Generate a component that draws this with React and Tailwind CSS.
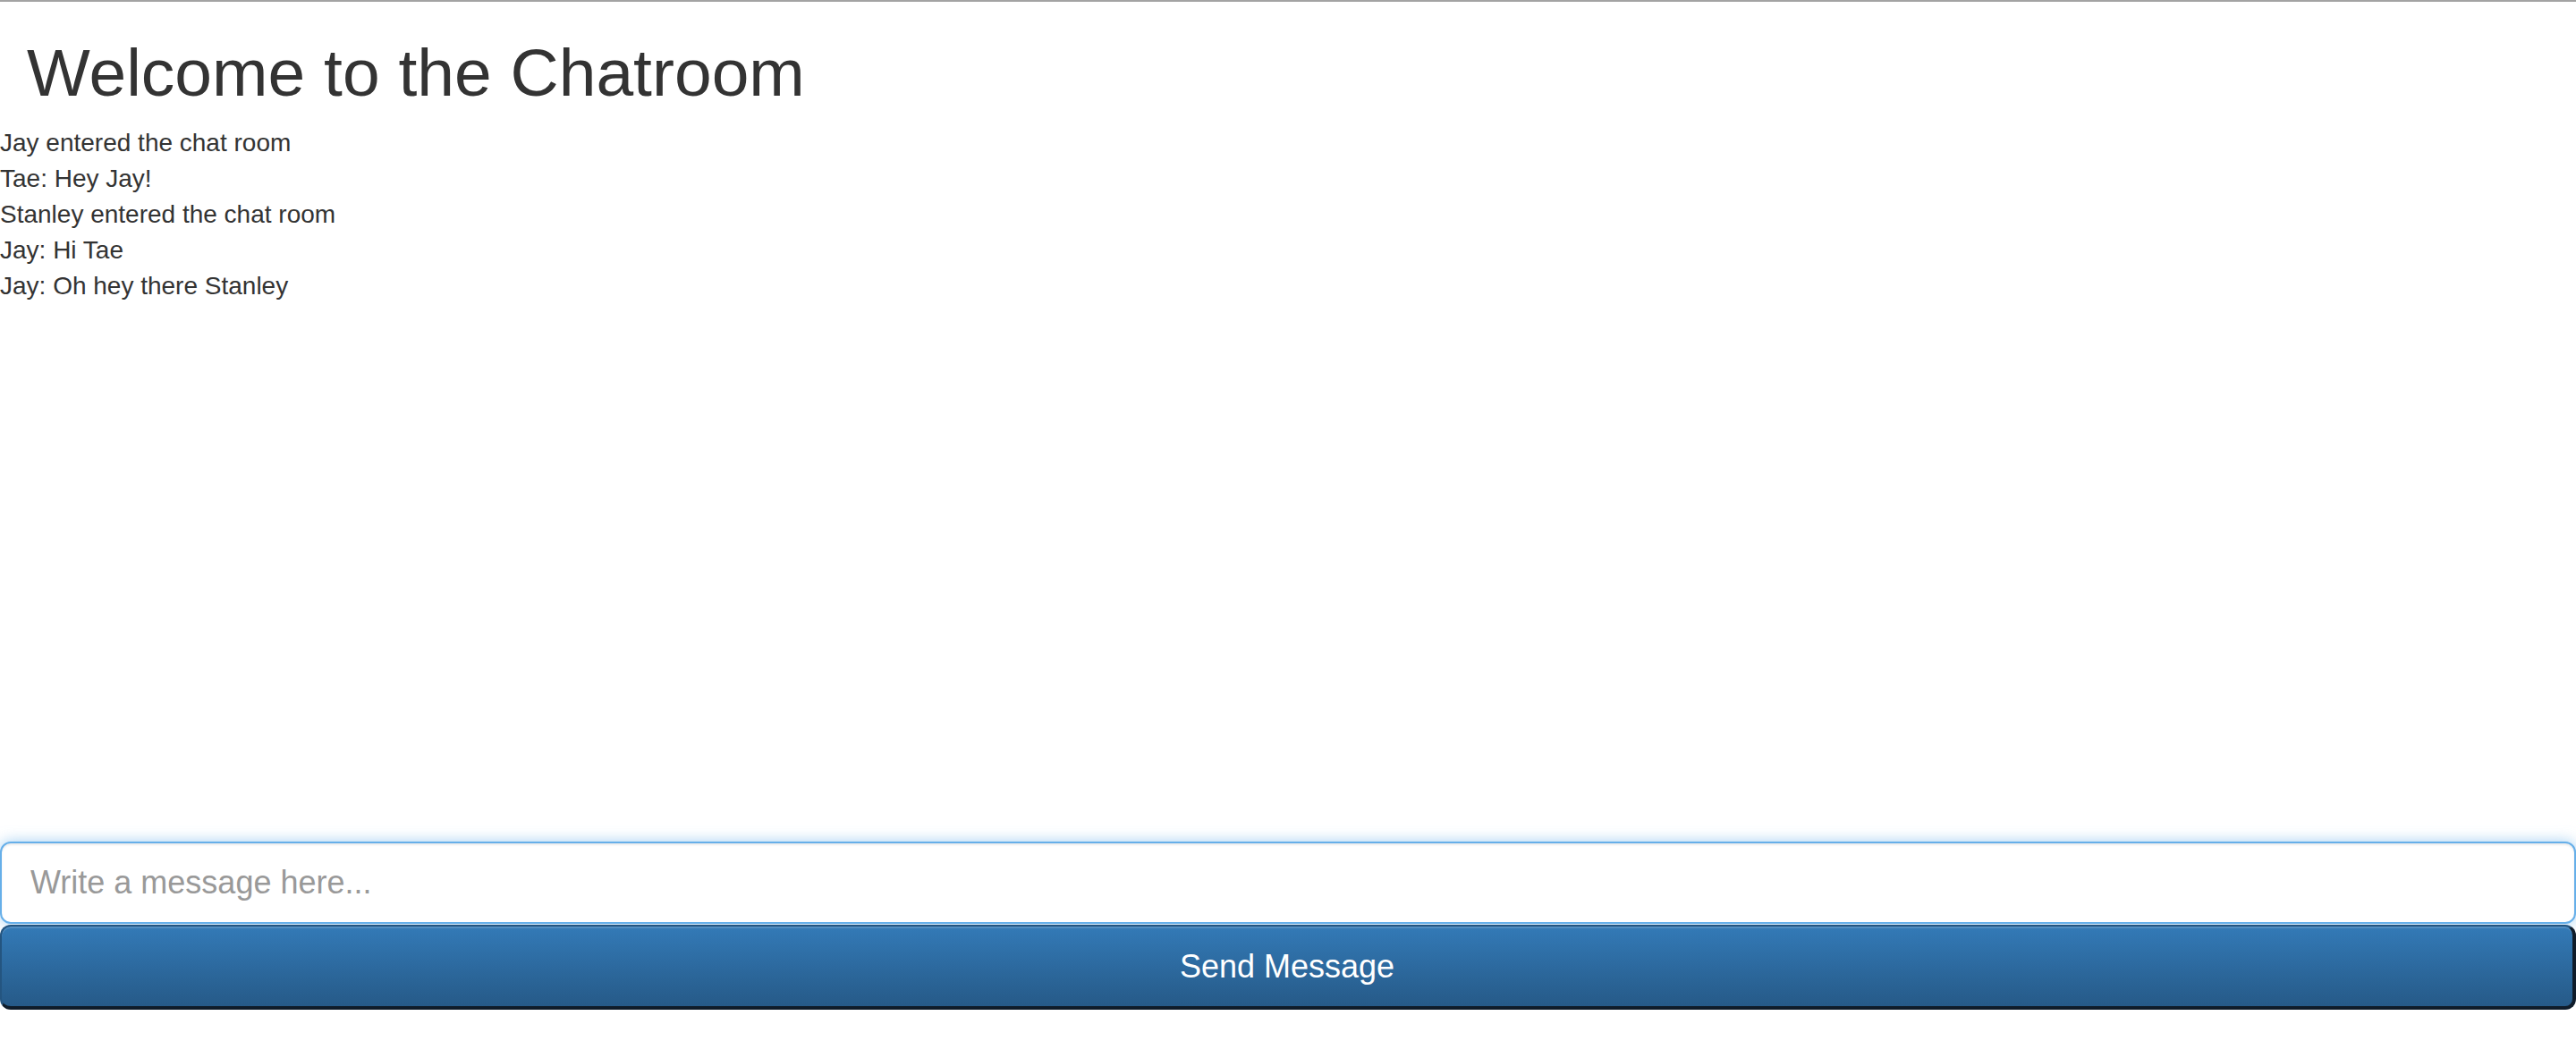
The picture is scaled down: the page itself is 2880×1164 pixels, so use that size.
import React, { useState } from 'react';

const messages = [
  'Jay entered the chat room',
  'Tae: Hey Jay!',
  'Stanley entered the chat room',
  'Jay: Hi Tae',
  'Jay: Oh hey there Stanley',
];

const App = () => {
  const [text, setText] = useState('');

  return (
    <div className="h-screen flex flex-col bg-white text-[#333] border-t-2 border-[#a3a3a3] font-['Liberation_Sans',Arial,sans-serif]">
      <h1 className="mt-[40px] mb-[19px] px-[30px] text-[75px] leading-[79px] font-normal">
        Welcome to the Chatroom
      </h1>

      <div className="flex-1 text-[28px] leading-[40px]">
        {messages.map((m, i) => (
          <div key={i}>{m}</div>
        ))}
      </div>

      <div className="flex flex-col pb-[35px]">
        <input
          value={text}
          onChange={(e) => setText(e.target.value)}
          placeholder="Write a message here..."
          className="h-[92px] w-full px-[32px] text-[36px] text-[#555] placeholder:text-[#999] bg-white border-2 border-[#66afe9] rounded-[12px] outline-none shadow-[inset_0_2px_2px_rgba(0,0,0,0.075),0_0_16px_rgba(102,175,233,0.6)]"
        />
        <button
          className="h-[95px] w-full mt-[1px] text-[36px] text-white rounded-[12px] border-t-2 border-l-2 border-r-4 border-b-4 border-t-[#245580] border-l-[#245580] border-r-[#0f1c2a] border-b-[#0f1c2a] bg-gradient-to-b from-[#337ab7] to-[#265a88] shadow-[inset_0_2px_0_rgba(255,255,255,0.15)]"
        >
          Send Message
        </button>
      </div>
    </div>
  );
};

export default App;
